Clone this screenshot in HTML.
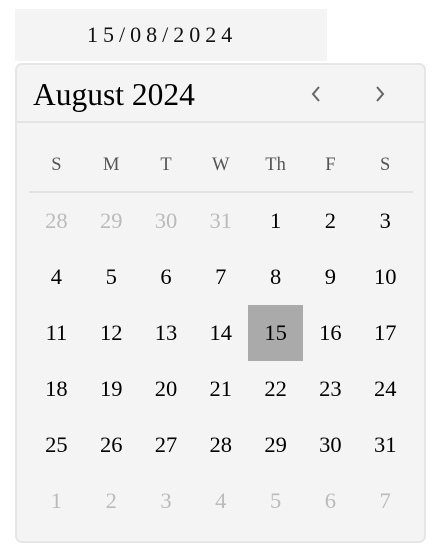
<!DOCTYPE html>
<html><head><style>
*{margin:0;padding:0;box-sizing:border-box}
body{width:444px;height:556px;background:#fff;position:relative;font-family:"Liberation Serif",serif;overflow:hidden}
.inp{position:absolute;left:15px;top:9px;width:312px;height:52px;background:#f4f4f4;font-size:22px;letter-spacing:5px;line-height:52px;padding-left:72px;color:#111}
.cal{position:absolute;left:15px;top:63px;width:411px;height:480px;background:#f4f4f4;border:2px solid #e6e6e6;border-radius:7px}
.title{position:absolute;left:16px;top:11px;font-size:31.5px;line-height:38px;color:#000}
.hd{position:absolute;left:0;right:0;top:56px;height:2px;background:#e4e4e8}
.wl{position:absolute;left:12px;width:384px;top:126px;height:2px;background:#e4e4e8}
.c{position:absolute;width:54.8px;text-align:center;font-size:22.5px;line-height:56px;height:56px;color:#000}
.w{font-size:18.5px;color:#555;line-height:24px;height:24px}
.g{color:#bbb}
.sel{background:#aaa}
svg{position:absolute}
</style></head><body>
<div class="inp">15/08/2024</div>
<div class="cal">
<div class="title">August 2024</div>
<svg style="left:293px;top:20px" width="12" height="18" viewBox="0 0 12 18"><path d="M9 2 L3 9 L9 16" fill="none" stroke="#666" stroke-width="2"/></svg>
<svg style="left:357px;top:20px" width="12" height="18" viewBox="0 0 12 18"><path d="M3 2 L9 9 L3 16" fill="none" stroke="#666" stroke-width="2"/></svg>
<div class="hd"></div>
<div class="wl"></div>
<div id="g"></div>
</div>
<script>
var g=document.getElementById('g'),h='';
var wd=['S','M','T','W','Th','F','S'];
for(var i=0;i<7;i++)h+='<div class="c w" style="left:'+(12+i*54.8)+'px;top:88px">'+wd[i]+'</div>';
var days=[28,29,30,31];for(var d=1;d<=31;d++)days.push(d);for(d=1;d<=7;d++)days.push(d);
for(var k=0;k<42;k++){var r=Math.floor(k/7),c=k%7;var cls='c';if(k<4||k>=35)cls+=' g';if(k==18)cls+=' sel';
h+='<div class="'+cls+'" style="left:'+(12+c*54.8)+'px;top:'+(128+r*56)+'px">'+days[k]+'</div>';}
g.innerHTML=h;
</script>
</body></html>
